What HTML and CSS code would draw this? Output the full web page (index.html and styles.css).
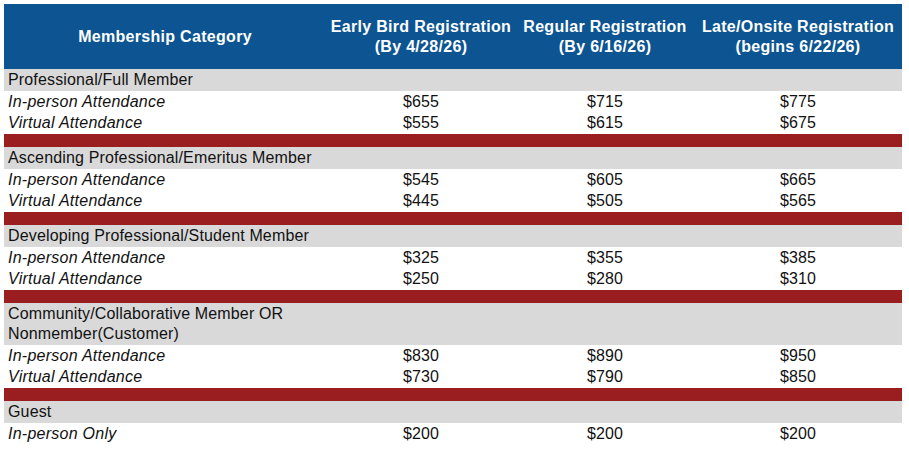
FILE: index.html
```html
<!DOCTYPE html>
<html>
<head>
<meta charset="utf-8">
<link rel="stylesheet" href="styles.css">
</head>
<body>
<table class="fees">
  <colgroup>
    <col class="c1"><col class="c2"><col class="c3"><col class="c4">
  </colgroup>
  <thead>
    <tr class="head">
      <th>Membership Category</th>
      <th>Early Bird Registration<br>(By 4/28/26)</th>
      <th>Regular Registration<br>(By 6/16/26)</th>
      <th>Late/Onsite Registration<br>(begins 6/22/26)</th>
    </tr>
  </thead>
  <tbody>
    <tr class="cat"><td>Professional/Full Member</td><td></td><td></td><td></td></tr>
    <tr class="row"><td>In-person Attendance</td><td>$655</td><td>$715</td><td>$775</td></tr>
    <tr class="row"><td>Virtual Attendance</td><td>$555</td><td>$615</td><td>$675</td></tr>
    <tr class="sep"><td colspan="4"></td></tr>

    <tr class="cat"><td>Ascending Professional/Emeritus Member</td><td></td><td></td><td></td></tr>
    <tr class="row"><td>In-person Attendance</td><td>$545</td><td>$605</td><td>$665</td></tr>
    <tr class="row"><td>Virtual Attendance</td><td>$445</td><td>$505</td><td>$565</td></tr>
    <tr class="sep"><td colspan="4"></td></tr>

    <tr class="cat"><td>Developing Professional/Student Member</td><td></td><td></td><td></td></tr>
    <tr class="row"><td>In-person Attendance</td><td>$325</td><td>$355</td><td>$385</td></tr>
    <tr class="row"><td>Virtual Attendance</td><td>$250</td><td>$280</td><td>$310</td></tr>
    <tr class="sep"><td colspan="4"></td></tr>

    <tr class="cat two"><td>Community/Collaborative Member OR<br>Nonmember(Customer)</td><td></td><td></td><td></td></tr>
    <tr class="row"><td>In-person Attendance</td><td>$830</td><td>$890</td><td>$950</td></tr>
    <tr class="row"><td>Virtual Attendance</td><td>$730</td><td>$790</td><td>$850</td></tr>
    <tr class="sep"><td colspan="4"></td></tr>

    <tr class="cat"><td>Guest</td><td></td><td></td><td></td></tr>
    <tr class="row"><td>In-person Only</td><td>$200</td><td>$200</td><td>$200</td></tr>
  </tbody>
</table>
</body>
</html>
```
FILE: styles.css
```css
html, body {
  margin: 0;
  padding: 0;
  background: #ffffff;
}
body {
  padding: 4px 0 0 4px;
  font-family: "Liberation Sans", Arial, sans-serif;
  font-size: 16px;
  color: #111111;
}
.fees {
  border-collapse: collapse;
  border-spacing: 0;
  table-layout: fixed;
  width: 898px;
}
.c1 { width: 322px; }
.c2 { width: 190px; }
.c3 { width: 178px; }
.c4 { width: 208px; }
.fees th, .fees td {
  padding: 0;
  vertical-align: middle;
}
.head th {
  background: #0c5592;
  color: #ffffff;
  font-weight: bold;
  font-size: 16px;
  line-height: 20px;
  letter-spacing: 0.3px;
  height: 65px;
  text-align: center;
}
.cat td {
  background: #d9d9d9;
  height: 22px;
  line-height: 20px;
  padding-left: 4px;
  letter-spacing: 0.15px;
}
.cat.two td {
  height: 42px;
}
.row td {
  height: 21.5px;
  line-height: 20px;
  text-align: center;
  letter-spacing: 0.15px;
}
.row td:first-child {
  text-align: left;
  font-style: italic;
  padding-left: 4px;
  letter-spacing: 0.25px;
}
.sep td {
  background: #9a1d20;
  height: 13px;
}
```
